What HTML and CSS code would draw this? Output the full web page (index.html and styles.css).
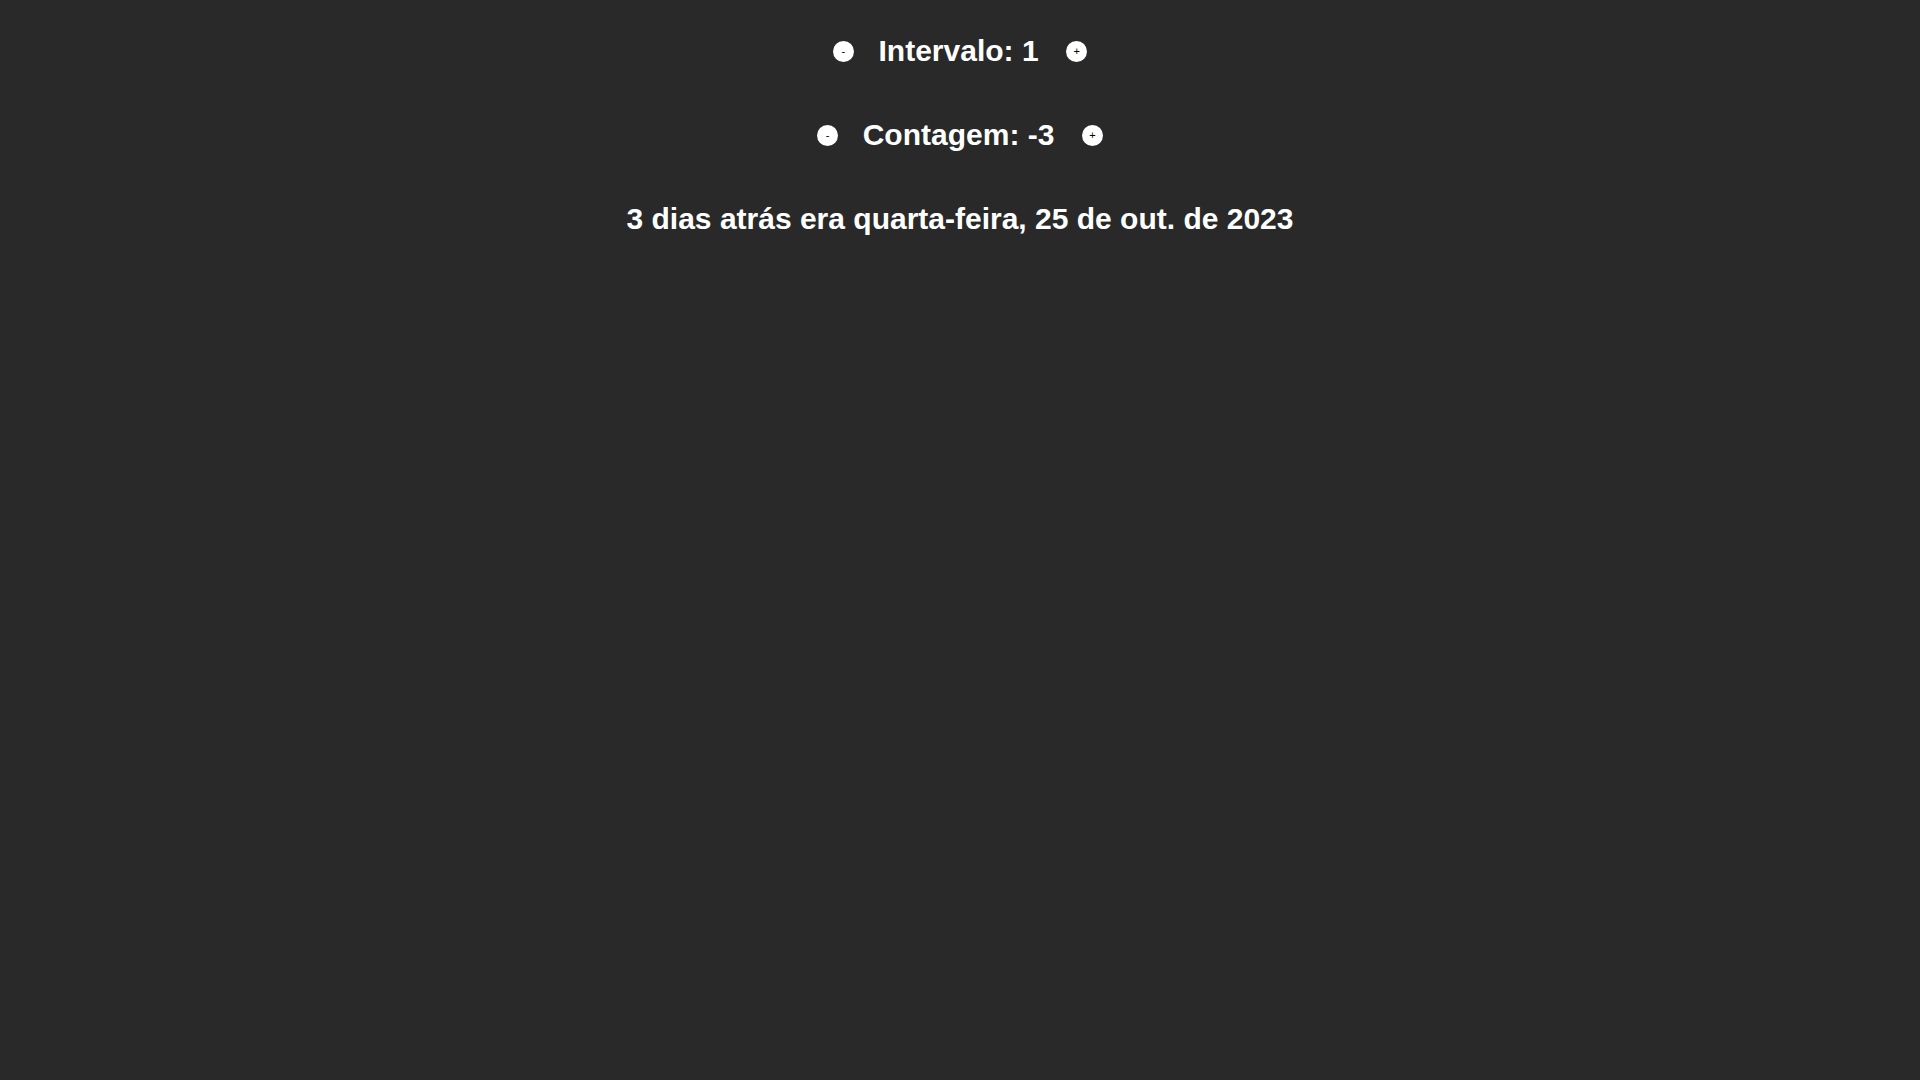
FILE: index.html
```html
<!DOCTYPE html>
<html lang="pt-BR">
<head>
<meta charset="utf-8">
<title>Contagem de dias</title>
<link rel="stylesheet" href="styles.css">
</head>
<body>
<main class="app">
  <div class="row">
    <button class="round-btn" type="button">-</button>
    <span class="label">Intervalo: 1</span>
    <button class="round-btn" type="button">+</button>
  </div>
  <div class="row">
    <button class="round-btn" type="button">-</button>
    <span class="label">Contagem: -3</span>
    <button class="round-btn" type="button">+</button>
  </div>
  <div class="row">
    <span class="label">3 dias atrás era quarta-feira, 25 de out. de 2023</span>
  </div>
</main>
</body>
</html>
```

FILE: styles.css
```css
html, body {
  margin: 0;
  padding: 0;
  background: #292929;
}

body {
  font-family: "Liberation Sans", Arial, sans-serif;
  color: #ffffff;
}

.app {
  display: flex;
  flex-direction: column;
  align-items: center;
  gap: 50px;
  padding-top: 34.3px;
}

.row {
  display: flex;
  align-items: center;
  justify-content: center;
  font-size: 30px;
  font-weight: bold;
  line-height: normal;
}

.label {
  white-space: nowrap;
}

.row .round-btn:first-child {
  margin-right: 24.7px;
}

.row .round-btn:last-child {
  margin-left: 27.6px;
}

.round-btn {
  width: 21px;
  height: 21px;
  padding: 0;
  border: none;
  border-radius: 50%;
  background: #ffffff;
  color: #000000;
  font-family: "Liberation Sans", Arial, sans-serif;
  font-size: 11px;
  font-weight: normal;
  line-height: 21px;
  text-align: center;
  cursor: pointer;
}
```
